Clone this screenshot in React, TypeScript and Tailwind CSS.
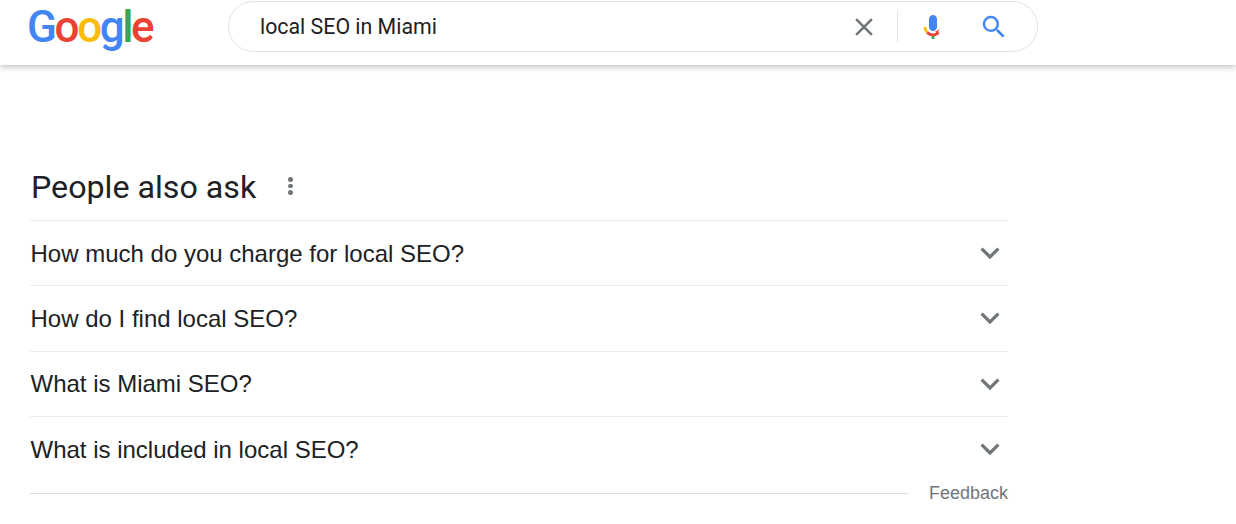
const rows = [
  "How much do you charge for local SEO?",
  "How do I find local SEO?",
  "What is Miami SEO?",
  "What is included in local SEO?",
];

function Chevron() {
  return (
    <svg width="32" height="32" viewBox="0 0 32 32" className="-mt-[1.5px] shrink-0">
      <path d="M7.6 11.6 L16 20 L24.4 11.6" fill="none" stroke="#70757a" strokeWidth="3.2" />
    </svg>
  );
}

function Logo() {
  return (
    <div className="font-['Roboto',sans-serif] text-[44px] font-medium leading-[52px] tracking-[-2.4px] select-none whitespace-nowrap">
      <span className="text-[#4285f4]">G</span>
      <span className="text-[#ea4335]">o</span>
      <span className="text-[#fbbc05]">o</span>
      <span className="text-[#4285f4]">g</span>
      <span className="text-[#34a853]">l</span>
      <span className="text-[#ea4335]">e</span>
    </div>
  );
}

export default function App() {
  return (
    <div className="h-[524px] w-[1236px] overflow-hidden bg-white font-['Roboto',sans-serif] text-[#202124]">
      <header className="flex h-[65px] items-start shadow-[0_2px_6px_rgba(32,33,36,0.28)]">
        <div className="ml-[27px] mt-[1px] w-[127px]">
          <Logo />
        </div>
        <div className="ml-[74px] mt-px flex h-[51px] w-[810px] items-center rounded-full border border-[#dfe1e5] pl-[31px] pr-[28px]">
          <span className="flex-1 text-[21.33px]">local SEO in Miami</span>
          <svg width="30" height="30" viewBox="0 0 24 24" fill="#70757a" className="mr-[18px]">
            <path d="M19 6.41 17.59 5 12 10.59 6.41 5 5 6.41 10.59 12 5 17.59 6.41 19 12 13.41 17.59 19 19 17.59 13.41 12z" />
          </svg>
          <div className="mr-[19px] h-[31px] w-px bg-[#dfe1e5]" />
          <svg width="32" height="32" viewBox="0 0 24 24" className="mr-[30px]">
            <path fill="#4285f4" d="M12 15c1.66 0 3-1.31 3-2.97V5.97C15 4.31 13.66 3 12 3S9 4.31 9 5.97v6.06C9 13.69 10.34 15 12 15z" />
            <path fill="#34a853" d="M11 18.08h2V21h-2z" />
            <path fill="#fbbc05" d="M7.05 16.87c-1.27-1.33-2.05-3-2.05-4.87h2c0 1.45.56 2.5 1.47 3.44z" />
            <path fill="#ea4335" d="M12 16.93c-1.45 0-2.6-.57-3.53-1.49l-1.42 1.43C8.3 18.12 10 19 12 19c1.96 0 3.7-.86 4.95-2.13l-1.42-1.43c-.92.92-2.08 1.49-3.53 1.49z" />
            <path fill="#ea4335" d="M17 12c0 1.87-.78 3.54-2.05 4.87l-1.42-1.43C16.44 14.5 17 13.45 17 12z" />
          </svg>
          <svg width="30" height="30" viewBox="0 0 24 24" fill="#4285f4">
            <path d="M15.5 14h-.79l-.28-.27A6.471 6.471 0 0 0 16 9.5 6.5 6.5 0 1 0 9.5 16c1.61 0 3.09-.59 4.23-1.57l.27.28v.79l5 4.99L20.49 19l-4.99-5zm-6 0C7.01 14 5 11.99 5 9.5S7.01 5 9.5 5 14 7.01 14 9.5 11.99 14 9.5 14z" />
          </svg>
        </div>
      </header>

      <main className="ml-[30px] w-[978px]">
        <div className="mt-[100px] flex h-[55px] items-start">
          <h2 className="ml-px text-[32.2px] font-normal leading-[44px]">People also ask</h2>
          <div className="ml-[32px] mt-[12px] flex flex-col gap-[2px]">
            <span className="h-[4.5px] w-[4.5px] rounded-full bg-[#70757a]" />
            <span className="h-[4.5px] w-[4.5px] rounded-full bg-[#70757a]" />
            <span className="h-[4.5px] w-[4.5px] rounded-full bg-[#70757a]" />
          </div>
        </div>
        {rows.map((r) => (
          <div key={r} className="flex h-[65.33px] items-center justify-between border-t border-[#ebebeb] pr-[2px] pt-[1px]">
            <span className="font-['Liberation_Sans',sans-serif] ml-[0.5px] text-[24px]">{r}</span>
            <Chevron />
          </div>
        ))}
        <div className="-mt-[1px] flex items-center">
          <div className="h-px w-[878px] bg-[#dadce0]" />
          <span className="ml-auto font-['Liberation_Sans',sans-serif] text-[18px] text-[#70757a]">Feedback</span>
        </div>
      </main>
    </div>
  );
}
